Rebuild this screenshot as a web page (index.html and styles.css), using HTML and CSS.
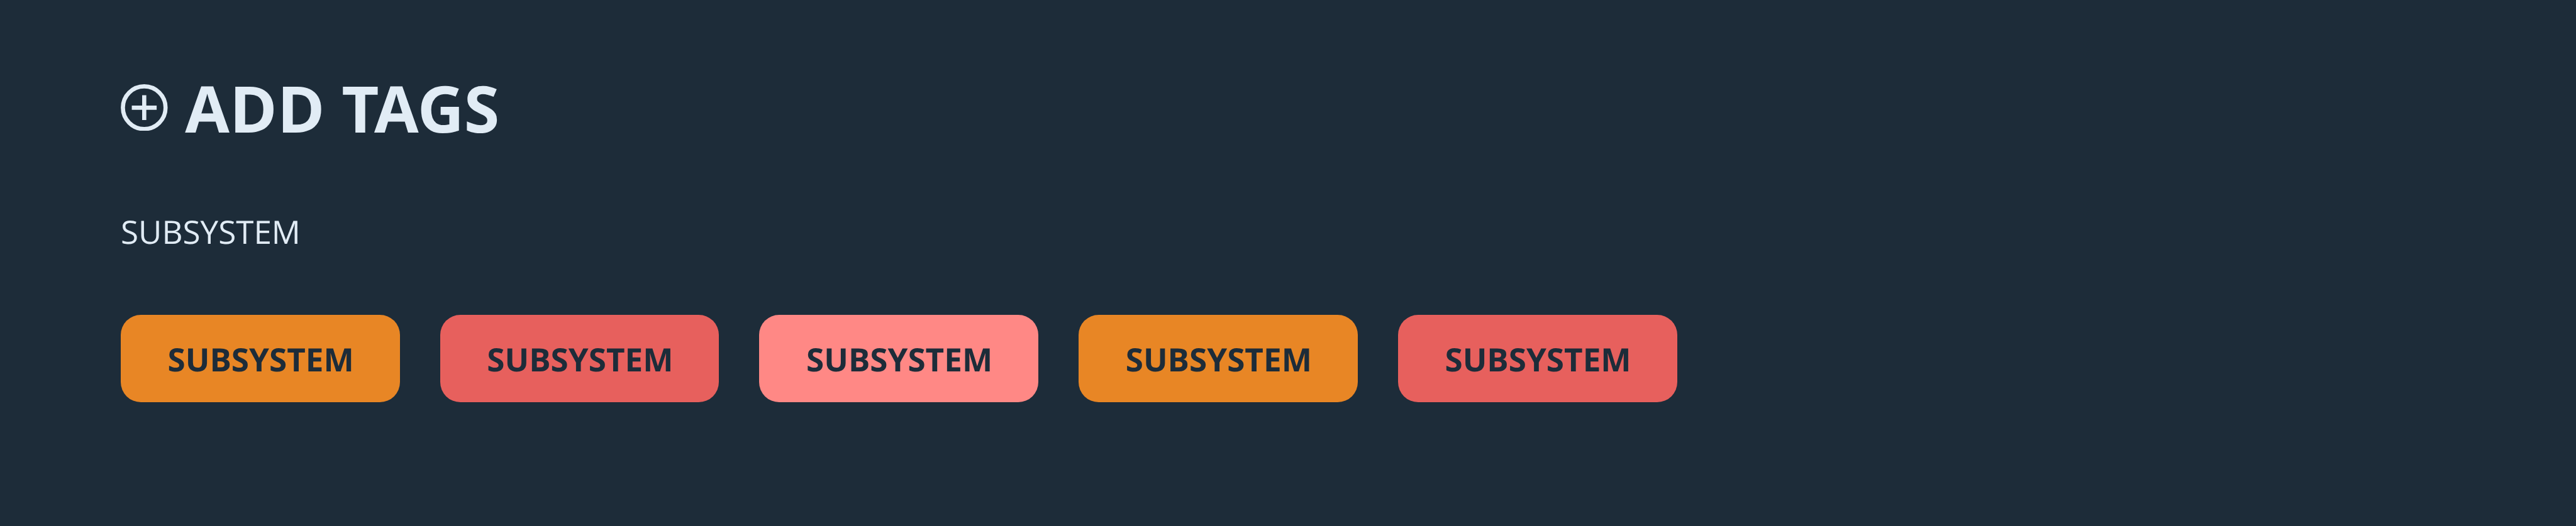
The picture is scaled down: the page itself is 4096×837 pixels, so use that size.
FILE: index.html
```
<!DOCTYPE html>
<html lang="en">
<head>
<meta charset="utf-8">
<title>Add tags</title>
<link rel="stylesheet" href="styles.css">
</head>
<body>
<main class="panel">
  <header class="panel-header">
    <svg class="add-icon" viewBox="0 0 105 105" fill="none" stroke="currentColor" stroke-width="9.3" aria-hidden="true">
      <circle cx="52.5" cy="52.5" r="47.7"/>
      <path d="M52.5 24.7v55.6M24.7 52.5h55.6"/>
    </svg>
    <h1 class="panel-title">ADD <span class="kern-ta">T</span><span class="kern-ag">A</span>GS</h1>
  </header>
  <h2 class="group-label">SUBSYSTEM</h2>
  <ul class="tags">
    <li class="tag tag-orange">SUBSYSTEM</li>
    <li class="tag tag-red">SUBSYSTEM</li>
    <li class="tag tag-pink">SUBSYSTEM</li>
    <li class="tag tag-orange">SUBSYSTEM</li>
    <li class="tag tag-red">SUBSYSTEM</li>
  </ul>
</main>
</body>
</html>
```
FILE: styles.css
```
* {
  box-sizing: border-box;
  margin: 0;
  padding: 0;
}

body {
  background: #1d2c39;
  color: #e1ecf5;
  font-family: "Open Sans", "Noto Sans", sans-serif;
  text-rendering: geometricPrecision;
}

.panel {
  height: 837px;
  padding: 102px 192px 0;
  overflow: hidden;
}

.panel-header {
  display: flex;
  align-items: center;
  gap: 27.7px;
  height: 139px;
}

.add-icon {
  display: block;
  flex: none;
  width: 74.67px;
  height: 74.67px;
  margin-bottom: 1px;
}

.panel-title {
  font-size: 102.4px;
  font-weight: 700;
  line-height: 139px;
  font-kerning: none;
}

/* Manual pair kerning for the display-size title */
.kern-ta {
  letter-spacing: -0.072em;
}

.kern-ag {
  letter-spacing: -0.02em;
}

.group-label {
  margin-top: 92px;
  font-size: 51.2px;
  font-weight: 400;
  line-height: 70px;
}

.tags {
  display: flex;
  gap: 64px;
  margin-top: 98.33px;
  list-style: none;
}

.tag {
  display: flex;
  align-items: center;
  justify-content: center;
  width: 443.73px;
  height: 138.67px;
  padding-left: 1.6px;
  border-radius: 32px;
  color: #1d2c39;
  font-size: 51.2px;
  font-weight: 700;
  line-height: 70px;
}

.tag-orange {
  background: #e88625;
}

.tag-red {
  background: #e7605d;
}

.tag-pink {
  background: #ff8885;
}
```
